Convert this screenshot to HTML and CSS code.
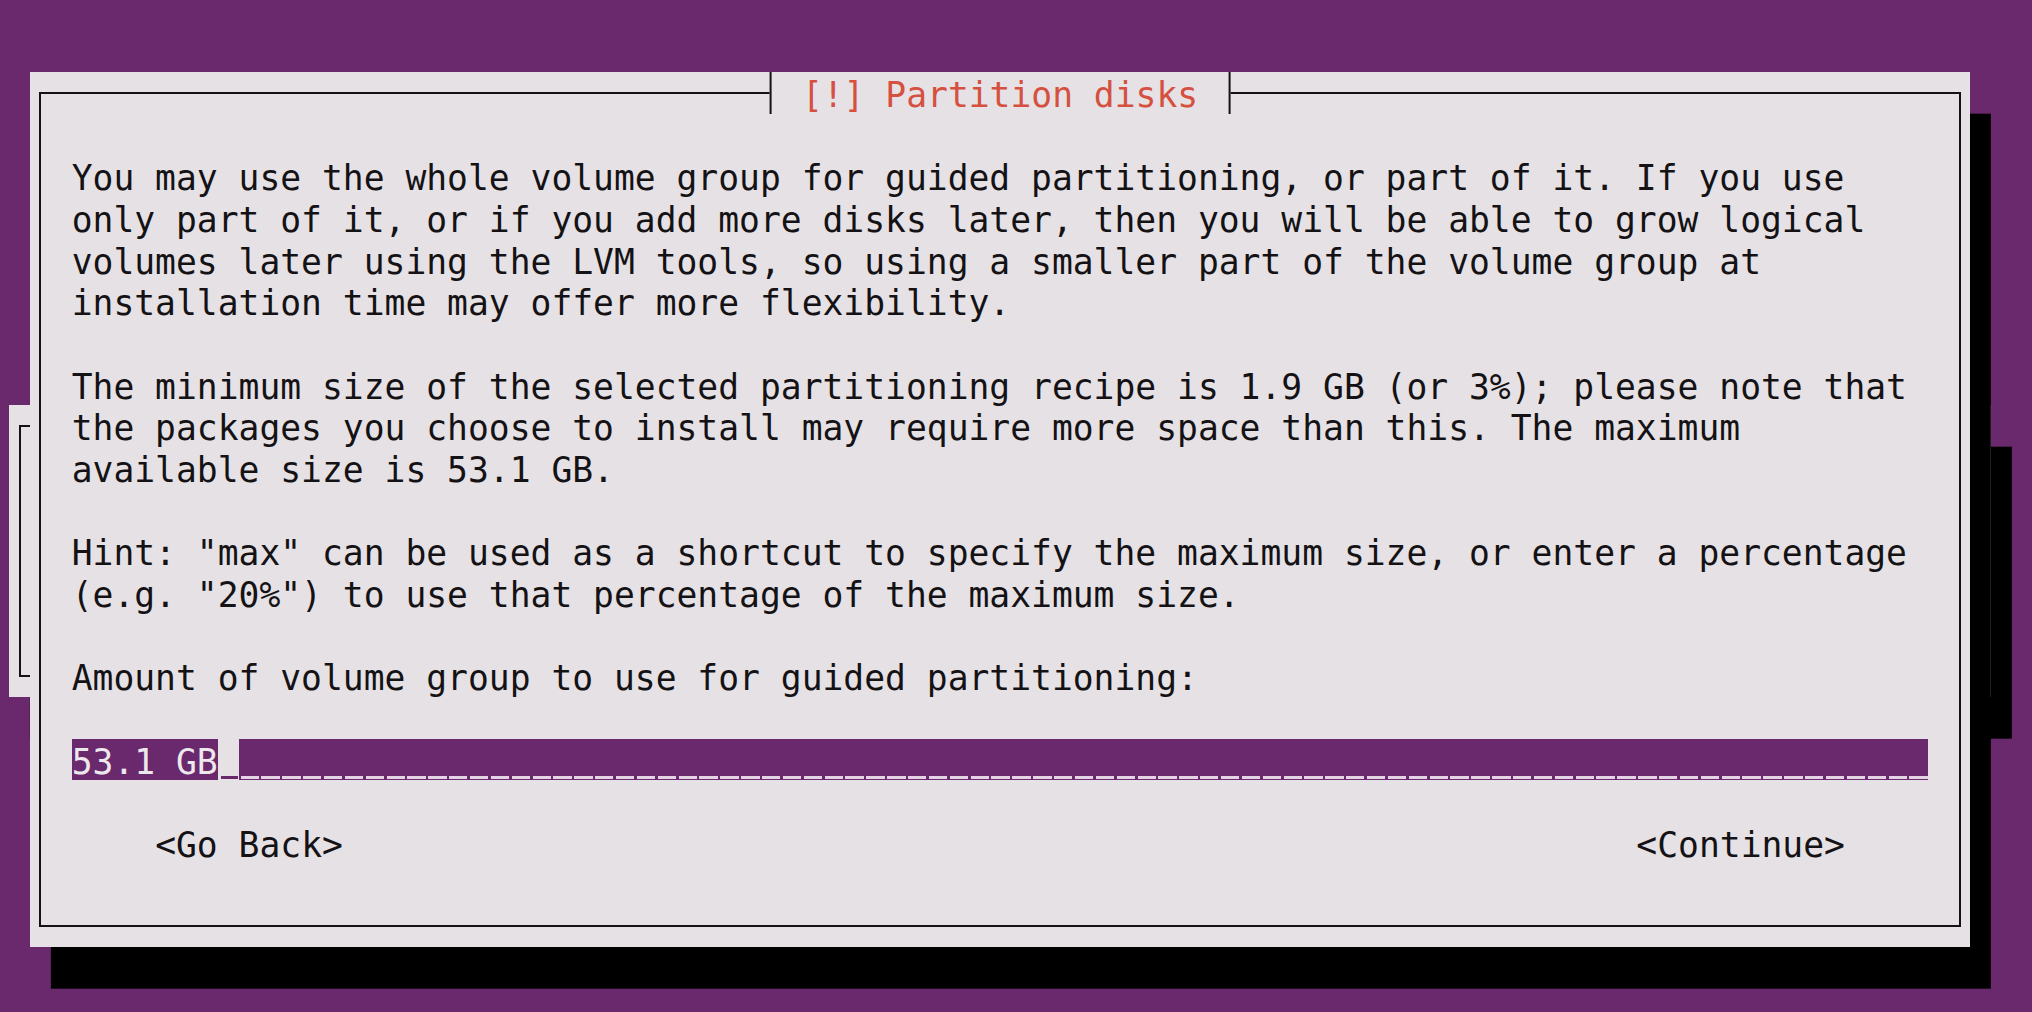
FILE: index.html
```html
<!DOCTYPE html>
<html lang="en">
<head>
    <meta charset="UTF-8">
    <meta name="viewport" content="width=device-width, initial-scale=1.0">
    <title>[!] Partition disks</title>
    <link rel="stylesheet" href="styles.css">
</head>
<body>

<div class="screen">
    <!-- dialog left behind by the previous step, mostly hidden -->
    <div class="window back-window">
        <div class="frame"></div>
    </div>

    <div class="window main-window">
        <div class="frame">
            <div class="title">[!] Partition disks</div>
            <div class="content">
                <p>You may use the whole volume group for guided partitioning, or part of it. If you use<br>only part of it, or if you add more disks later, then you will be able to grow logical<br>volumes later using the LVM tools, so using a smaller part of the volume group at<br>installation time may offer more flexibility.</p>
                <p>The minimum size of the selected partitioning recipe is 1.9 GB (or 3%); please note that<br>the packages you choose to install may require more space than this. The maximum<br>available size is 53.1 GB.</p>
                <p>Hint: "max" can be used as a shortcut to specify the maximum size, or enter a percentage<br>(e.g. "20%") to use that percentage of the maximum size.</p>
                <p>Amount of volume group to use for guided partitioning:</p>
                <div class="field">
                    <span class="field-value">53.1 GB</span>
                    <span class="field-cursor"></span>
                    <span class="field-rest"></span>
                </div>
                <div class="buttons">
                    <span class="btn">&lt;Go Back&gt;</span>
                    <span class="btn">&lt;Continue&gt;</span>
                </div>
            </div>
        </div>
    </div>
</div>

</body>
</html>
```

FILE: styles.css
```css
:root {
    --cw: 20.861px;
    --rh: 41.667px;
    --purple: #69296c;
    --panel: #e5e1e5;
    --ink: #141214;
    --dash: #e3d3e3;
}
body {
    margin: 0;
    background-color: var(--purple);
    font-family: "DejaVu Sans Mono", "Liberation Mono", monospace;
    font-size: 34.65px;
    line-height: var(--rh);
    color: var(--ink);
    overflow: hidden;
}
.screen {
    position: relative;
    width: 2032px;
    height: 1012px;
}
.window {
    position: absolute;
    box-sizing: border-box;
    background-color: var(--panel);
    padding: calc(var(--rh) / 2 - 1px) calc(var(--cw) / 2 - 1px);
    box-shadow: var(--cw) var(--rh) 0 #000;
}
.frame {
    position: relative;
    border: 2px solid var(--ink);
}
.back-window {
    left: calc(30px - var(--cw));
    top: calc(72px + 8 * var(--rh));
    width: calc(95 * var(--cw));
    height: calc(7 * var(--rh));
}
.back-window .frame {
    box-sizing: border-box;
    height: 100%;
}
.main-window {
    left: 30px;
    top: 72px;
    width: calc(93 * var(--cw));
}
.main-window .frame {
    padding: calc(1.5 * var(--rh) + 2px) calc(1.5 * var(--cw) - 1px) calc(1.5 * var(--rh) - 4px);
}
.title {
    position: absolute;
    top: calc(var(--rh) / -2 - 1px);
    left: 50%;
    transform: translateX(-50%);
    box-sizing: border-box;
    height: var(--rh);
    padding: 3px calc(1.5 * var(--cw) - 1px) 0;
    border-left: 2px solid var(--ink);
    border-right: 2px solid var(--ink);
    background-color: var(--panel);
    color: #d6503f;
    white-space: nowrap;
}
.content p {
    margin: 0 0 var(--rh);
    white-space: nowrap;
}
.field {
    display: flex;
    height: var(--rh);
    margin-bottom: var(--rh);
}
.field span {
    box-sizing: border-box;
    height: var(--rh);
    margin-top: -3px;
    padding-top: 3px;
}
.field-value {
    background-color: var(--purple);
    color: #ece8ec;
}
.field-cursor {
    width: var(--cw);
    background: linear-gradient(to right, transparent 3px, var(--purple) 3px, var(--purple) calc(var(--cw) - 0.5px), transparent calc(var(--cw) - 0.5px)) 0 37px / 100% 3px no-repeat;
}
.field-rest {
    flex: 1;
    background: var(--purple) repeating-linear-gradient(to right, transparent 0, transparent 1.5px, var(--dash) 1.5px, var(--dash) calc(var(--cw) - 1px), transparent calc(var(--cw) - 1px), transparent var(--cw)) 0 37px / 100% 3px no-repeat;
}
.buttons {
    display: flex;
    justify-content: space-between;
    padding: 0 calc(4 * var(--cw));
    white-space: pre;
}
```
